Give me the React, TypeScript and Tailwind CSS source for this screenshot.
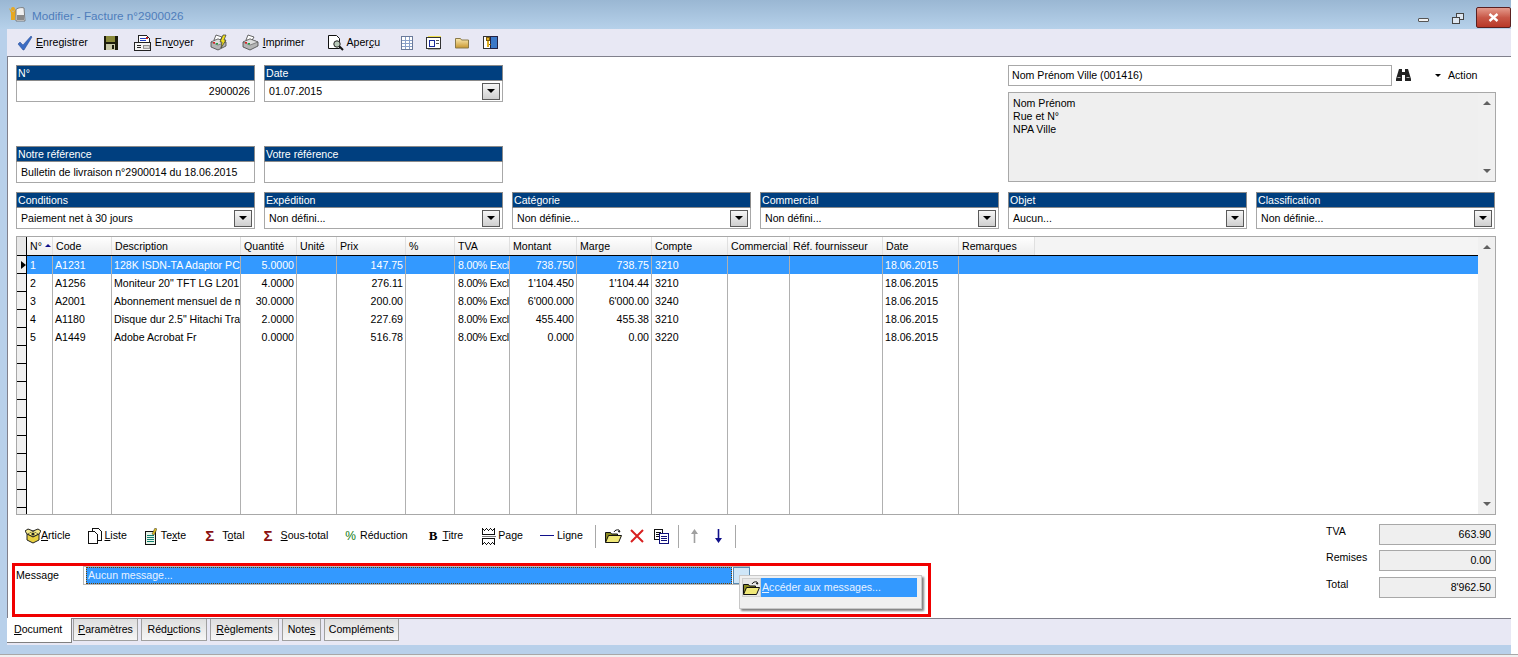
import type { ReactNode } from "react"

const font = "font-['Liberation_Sans',Arial,sans-serif]"

const Check = () => (
  <svg width="16" height="16" viewBox="0 0 16 16">
    <path d="M1 9l2-2 3 3 8-9 1 1-8 13h-1z" fill="#3b6cc4" stroke="#24488f" strokeWidth="0.5" />
  </svg>
)

const Floppy = () => (
  <svg width="15" height="15" viewBox="0 0 15 15" shapeRendering="crispEdges">
    <rect x="0.5" y="0.5" width="14" height="14" fill="#1c1c0c" />
    <rect x="3" y="1" width="9" height="6" fill="#8a8a3a" />
    <rect x="3" y="9" width="9" height="6" fill="#c8c8a8" />
    <rect x="9" y="10" width="2" height="4" fill="#1c1c0c" />
  </svg>
)

const Sender = () => (
  <svg width="17" height="17" viewBox="0 0 17 17" shapeRendering="crispEdges">
    <path d="M5 1h7l3 3v5H4V3z" fill="#fff" stroke="#222" />
    <rect x="6" y="4" width="6" height="1" fill="#2040c0" />
    <rect x="12" y="3" width="2" height="2" fill="#c02020" />
    <rect x="6" y="6" width="6" height="1" fill="#2040c0" />
    <rect x="0.5" y="8.5" width="16" height="8" fill="#f4f4f4" stroke="#222" />
    <rect x="3" y="11" width="4" height="1" fill="#222" />
    <rect x="3" y="13" width="4" height="1" fill="#222" />
    <rect x="9" y="11" width="6" height="3" fill="#d8d8d8" stroke="#444" strokeWidth="0.5" />
  </svg>
)

const Printer = ({ bolt }: { bolt?: boolean }) => (
  <svg width="17" height="17" viewBox="0 0 17 17">
    <path d="M6 1l6 2-3 5-5-2z" fill="#fff" stroke="#444" strokeWidth="0.8" />
    <path d="M1 8l7-3 8 3v4l-8 4-7-3z" fill="#b4b4b4" stroke="#444" strokeWidth="0.8" />
    <path d="M1 8l7 3 8-3-8-3z" fill="#dcdcdc" stroke="#555" strokeWidth="0.6" />
    <rect x="3" y="8" width="2" height="1.5" fill="#e02020" />
    <rect x="6" y="9" width="2" height="1.5" fill="#20a040" />
    {bolt && <path d="M13 1h3l-2 5h2l-5 8 1-6h-2z" fill="#f0e020" stroke="#333" strokeWidth="0.7" />}
  </svg>
)

const Preview = () => (
  <svg width="17" height="17" viewBox="0 0 17 17">
    <path d="M1.5 1.5h8l3 3v10h-11z" fill="#fff" stroke="#111" />
    <circle cx="10" cy="10" r="3.2" fill="#b8c8b8" stroke="#222" />
    <path d="M12.5 12.5l3.5 3.5" stroke="#111" strokeWidth="2" />
  </svg>
)

const SheetGrid = () => (
  <svg width="12" height="14" viewBox="0 0 12 14" shapeRendering="crispEdges">
    <rect x="0.5" y="0.5" width="11" height="13" fill="#fff" stroke="#6a7a9a" />
    <path d="M1 4h10M1 7h10M1 10h10M4.5 1v12M8.5 1v12" stroke="#8aa0c8" />
  </svg>
)

const Card = () => (
  <svg width="16" height="16" viewBox="0 0 16 16" shapeRendering="crispEdges">
    <rect x="2" y="1" width="13" height="3" fill="#f0e050" />
    <rect x="0.5" y="2.5" width="14" height="11" fill="#fff" stroke="#333" />
    <rect x="3" y="5" width="5" height="6" fill="#fff" stroke="#1a2a9a" />
    <rect x="10" y="5" width="3" height="1" fill="#555" />
    <rect x="10" y="8" width="3" height="1" fill="#555" />
    <rect x="2" y="14" width="12" height="1" fill="#aaa" />
  </svg>
)

const Folder = () => (
  <svg width="14" height="13" viewBox="0 0 14 13">
    <defs>
      <linearGradient id="fold" x1="0" y1="0" x2="0" y2="1">
        <stop offset="0" stopColor="#fbeab0" />
        <stop offset="1" stopColor="#c8962e" />
      </linearGradient>
    </defs>
    <path d="M0.5 2.5h5l1 1.5h7v8h-13z" fill="url(#fold)" stroke="#8a7a4a" />
  </svg>
)

const KeyBook = () => (
  <svg width="15" height="15" viewBox="0 0 15 15" shapeRendering="crispEdges">
    <rect x="0.5" y="1.5" width="7" height="12" fill="#fff" stroke="#333" />
    <rect x="7.5" y="1.5" width="7" height="12" fill="#3a78c8" stroke="#224" />
    <circle cx="5" cy="4" r="2" fill="#e0b020" stroke="#7a5a10" />
    <rect x="4" y="6" width="2" height="6" fill="#e0b020" />
    <rect x="6" y="9" width="2" height="1" fill="#7a5a10" />
  </svg>
)

const Binoculars = () => (
  <svg width="15" height="13" viewBox="0 0 15 13">
    <path d="M3 0h3v3h3V0h3l3 10v2H9V6H6v6H0v-2z" fill="#222" />
    <rect x="1.5" y="8" width="3" height="1" fill="#aaa" />
    <rect x="10.5" y="8" width="3" height="1" fill="#aaa" />
  </svg>
)

const ArticleBox = () => (
  <svg width="16" height="16" viewBox="0 0 16 16">
    <path d="M2 6l6-3 6 3-6 3z" fill="#fff27a" stroke="#222" />
    <path d="M2 6v6l6 3 6-3V6l-6 3z" fill="#e8d040" stroke="#222" />
    <path d="M2 6L0 3l3-2 5 2M14 6l2-3-3-2-5 2" fill="#f4e98a" stroke="#222" />
    <circle cx="8" cy="6" r="1.6" fill="#222" />
  </svg>
)

const Pages = () => (
  <svg width="14" height="16" viewBox="0 0 14 16" shapeRendering="crispEdges">
    <path d="M4.5 0.5h6l3 3v9h-9z" fill="#fff" stroke="#111" />
    <path d="M0.5 3.5h6l3 3v9h-9z" fill="#fff" stroke="#111" />
  </svg>
)

const Note = () => (
  <svg width="12" height="17" viewBox="0 0 12 17" shapeRendering="crispEdges">
    <rect x="0.5" y="3.5" width="10" height="13" fill="#e8f4e8" stroke="#111" />
    <path d="M2 7h7M2 9h7M2 11h7M2 13h7" stroke="#108070" />
    <path d="M7 6l3-6 2 1-3 6z" fill="#e0c020" stroke="#333" strokeWidth="0.5" shapeRendering="auto" />
  </svg>
)

const PageBreak = () => (
  <svg width="14" height="17" viewBox="0 0 14 17" shapeRendering="crispEdges">
    <path d="M0.5 6V0.5l2 2 2-2 2 2 2-2 2 2 2-2V6z" fill="#fff" stroke="#111" />
    <path d="M0.5 10v6.5l2-2 2 2 2-2 2 2 2-2 2 2V10z" fill="#fff" stroke="#111" />
    <path d="M0 8h14" stroke="#777" />
  </svg>
)

const OpenFolder = () => (
  <svg width="17" height="14" viewBox="0 0 17 14">
    <path d="M0.5 3.5h5l1 1.5h6v8h-12z" fill="#8a8a20" stroke="#111" />
    <path d="M3.5 6.5h13l-3 7h-13z" fill="#f0e878" stroke="#111" />
    <path d="M9 3c1-2 3-2.5 5-2l1 2-2-.5" fill="none" stroke="#111" />
  </svg>
)

const RedCross = () => (
  <svg width="14" height="14" viewBox="0 0 14 14">
    <path d="M1 1l12 12M13 1L1 13" stroke="#d82020" strokeWidth="2" />
  </svg>
)

const Copy = () => (
  <svg width="15" height="15" viewBox="0 0 15 15" shapeRendering="crispEdges">
    <rect x="0.5" y="0.5" width="8" height="10" fill="#fff" stroke="#111" />
    <path d="M2 3h5M2 5h5M2 7h5" stroke="#111" />
    <rect x="5.5" y="4.5" width="9" height="10" fill="#fff" stroke="#10107a" />
    <path d="M7 7h6M7 9h6M7 11h6" stroke="#10107a" />
  </svg>
)

const Arrow = ({ up, color }: { up?: boolean; color: string }) => (
  <svg width="9" height="14" viewBox="0 0 9 14" className={up ? "" : "rotate-180"}>
    <path d="M4.5 0L8 5H5.3v9H3.7V5H1z" fill={color} />
  </svg>
)

const Sel = () => (
  <span className="mr-[2px] flex h-[17px] w-[18px] shrink-0 items-center justify-center border border-[#5a5a5a] bg-gradient-to-b from-[#f6f6f6] to-[#cfcfcf]">
    <span className="h-0 w-0 border-x-[4px] border-t-[4px] border-x-transparent border-t-black" />
  </span>
)

const Field = ({ label, value, align, select }: { label: string; value?: string; align?: string; select?: boolean }) => (
  <div className="w-[239px]">
    <div className="h-[16px] border border-[#8a8a8a] bg-[#003f7f] pl-[1px] text-[10.6px] leading-[15px] text-white">{label}</div>
    <div className="flex h-[21px] items-center border border-t-0 border-[#a8a8a8] bg-white">
      <span className={`flex-1 px-[4px] pt-[1px] text-[10.6px] ${align ?? ""}`}>{value}</span>
      {select && <Sel />}
    </div>
  </div>
)

const columns = [
  { key: "no", title: "N°", w: "w-[26px]", cell: "pl-[3px]" },
  { key: "code", title: "Code", w: "w-[59px]", cell: "pl-[2px]" },
  { key: "desc", title: "Description", w: "w-[129px]", cell: "pl-[2px]" },
  { key: "qty", title: "Quantité", w: "w-[56px]", cell: "pr-[2px] text-right" },
  { key: "unit", title: "Unité", w: "w-[40px]", cell: "" },
  { key: "price", title: "Prix", w: "w-[69px]", cell: "pr-[2px] text-right" },
  { key: "pct", title: "%", w: "w-[49px]", cell: "" },
  { key: "tva", title: "TVA", w: "w-[55px]", cell: "pl-[3px] tracking-[-0.2px]" },
  { key: "amount", title: "Montant", w: "w-[67px]", cell: "pr-[2px] text-right" },
  { key: "margin", title: "Marge", w: "w-[75px]", cell: "pr-[2px] text-right" },
  { key: "account", title: "Compte", w: "w-[76px]", cell: "pl-[3px]" },
  { key: "sales", title: "Commercial", w: "w-[62px]", cell: "" },
  { key: "ref", title: "Réf. fournisseur", w: "w-[93px]", cell: "" },
  { key: "date", title: "Date", w: "w-[76px]", cell: "pl-[2px]" },
  { key: "notes", title: "Remarques", w: "w-[76px]", cell: "" },
]

const rows: Record<string, string>[] = [
  { no: "1", code: "A1231", desc: "128K ISDN-TA Adaptor PC", qty: "5.0000", price: "147.75", tva: "8.00% Excl", amount: "738.750", margin: "738.75", account: "3210", date: "18.06.2015" },
  { no: "2", code: "A1256", desc: 'Moniteur 20" TFT LG L201', qty: "4.0000", price: "276.11", tva: "8.00% Excl", amount: "1'104.450", margin: "1'104.44", account: "3210", date: "18.06.2015" },
  { no: "3", code: "A2001", desc: "Abonnement mensuel de m", qty: "30.0000", price: "200.00", tva: "8.00% Excl", amount: "6'000.000", margin: "6'000.00", account: "3240", date: "18.06.2015" },
  { no: "4", code: "A1180", desc: 'Disque dur 2.5" Hitachi Tra', qty: "2.0000", price: "227.69", tva: "8.00% Excl", amount: "455.400", margin: "455.38", account: "3210", date: "18.06.2015" },
  { no: "5", code: "A1449", desc: "Adobe Acrobat Fr", qty: "0.0000", price: "516.78", tva: "8.00% Excl", amount: "0.000", margin: "0.00", account: "3220", date: "18.06.2015" },
  ...Array.from({ length: 10 }, () => ({})),
]

const Scrollbar = () => (
  <div className="flex w-[17px] shrink-0 flex-col items-center justify-between bg-[#f0f0f0] py-[8px]">
    <span className="h-0 w-0 border-x-[4px] border-b-[4px] border-x-transparent border-b-[#606060]" />
    <span className="h-0 w-0 border-x-[4px] border-t-[4px] border-x-transparent border-t-[#606060]" />
  </div>
)

const Grid = () => (
  <div className="mt-[7px] flex h-[279px] w-[1480px] overflow-hidden border border-[#a8a8a8] bg-white">
    <div className="min-w-0 flex-1 overflow-hidden">
      <div className="flex h-[19px] border-b border-black">
        <div className="w-[10px] shrink-0 border-r border-black bg-[#e8e8e8]" />
        {columns.map((c) => (
          <div
            key={c.key}
            className={`relative shrink-0 overflow-hidden whitespace-nowrap border-r border-[#e0e0e0] bg-gradient-to-b from-white to-[#ececec] pl-[3px] text-[10.6px] leading-[18px] ${c.w}`}
          >
            {c.title}
            {c.key === "no" && (
              <span className="absolute left-[18px] top-[7px] h-0 w-0 border-x-[3px] border-b-[3px] border-x-transparent border-b-[#10108a]" />
            )}
          </div>
        ))}
        <div className="flex-1 bg-[#f4f4f4]" />
      </div>
      {rows.map((row, i) => (
        <div key={i} className={`flex h-[18px] ${i === 0 ? "bg-[#3399ff] text-white" : "text-black"}`}>
          <div className="flex w-[10px] shrink-0 items-center border-b border-r border-black bg-[#f0f0f0] text-black">
            {i === 0 && <span className="ml-[4px] h-0 w-0 border-y-[4px] border-l-[5px] border-y-transparent border-l-black" />}
          </div>
          {columns.map((c) => (
            <div
              key={c.key}
              className={`shrink-0 overflow-hidden whitespace-nowrap text-[10.6px] leading-[18px] ${c.w} ${c.cell} ${c.key === "notes" ? "" : "border-r border-[#b0b0b0]"}`}
            >
              {row[c.key]}
            </div>
          ))}
        </div>
      ))}
    </div>
    <Scrollbar />
  </div>
)

const Tool = ({ icon, children, className }: { icon?: ReactNode; children?: ReactNode; className?: string }) => (
  <div className={`flex shrink-0 items-center text-[10.6px] ${className ?? ""}`}>
    {icon}
    {children}
  </div>
)

const Sep = ({ className }: { className: string }) => <div className={`h-[23px] w-[1px] shrink-0 bg-[#a8a8a8] ${className}`} />

const Total = ({ label, value }: { label: string; value: string }) => (
  <div className="flex h-[21px] w-[170px] items-start justify-between text-[10.6px]">
    <span className="leading-[15px]">{label}</span>
    <span className="h-[21px] w-[117px] border border-[#a8a8a8] bg-[#efefef] pr-[4px] text-right leading-[19px]">{value}</span>
  </div>
)

const tabs = [
  { label: <><u>P</u>aramètres</>, w: "ml-[1px] w-[65px]" },
  { label: <>Réd<u>u</u>ctions</>, w: "ml-[3px] w-[66px]" },
  { label: <><u>R</u>èglements</>, w: "ml-[3px] w-[69px]" },
  { label: <>Note<u>s</u></>, w: "ml-[3px] w-[39px]" },
  { label: <>Compléments</>, w: "ml-[3px] w-[75px]" },
]

export default function App() {
  return (
    <div className={`flex h-[657px] w-[1518px] flex-col overflow-hidden bg-white text-black ${font}`}>
      <div className="flex h-[654px] w-[1511px] flex-col bg-[#b8d0ea]">
        <div className="flex h-[29px] shrink-0 items-center bg-gradient-to-b from-[#9ab7d3] to-[#b6d1ea]">
          <svg width="17" height="17" viewBox="0 0 17 17" className="ml-[9px]">
            <circle cx="4" cy="3" r="2" fill="#e8a820" />
            <path d="M0 2l4 4 3-3-1 11H2V7z" fill="#e8a820" />
            <path d="M7 4c0-2 6-3 8-2l1 13H7z" fill="#f0f0f0" stroke="#666" strokeWidth="0.8" />
            <rect x="8" y="9" width="7" height="5" fill="#8a8a8a" />
          </svg>
          <span className="ml-[6px] pt-[3px] text-[11.7px] text-[#4f7dbb]">Modifier - Facture n°2900026</span>
          <div className="ml-auto flex items-start self-start pt-[7px]">
            <span className="mt-[11px] h-[4px] w-[11px] rounded-[1px] border border-[#555] bg-[#f2f2f2]" />
            <svg width="12" height="11" viewBox="0 0 12 11" className="ml-[23px] mt-[6px]" shapeRendering="crispEdges">
              <rect x="4.5" y="0.5" width="7" height="6" fill="#dde6f0" stroke="#444" />
              <rect x="0.5" y="4.5" width="7" height="6" fill="#dde6f0" stroke="#444" />
            </svg>
            <div className="ml-[12px] flex h-[21px] w-[35px] items-center justify-center rounded-[2px] border border-[#5a2020] bg-gradient-to-b from-[#e49a8c] via-[#c85848] to-[#b83828]">
              <svg width="11" height="9" viewBox="0 0 11 9">
                <path d="M1.5 1l8 7M9.5 1l-8 7" stroke="#fff" strokeWidth="2.4" />
              </svg>
            </div>
          </div>
        </div>

        <div className="flex min-h-0 flex-1 flex-col pb-[9px] pl-[7px]">
          <div className="flex h-[27px] shrink-0 items-center bg-[#e8e8f4] pl-[10px]">
            <Tool icon={<Check />}><span className="ml-[3px]"><u>E</u>nregistrer</span></Tool>
            <Tool className="ml-[15px]" icon={<Floppy />} />
            <Tool className="ml-[16px]" icon={<Sender />}><span className="ml-[4px]">En<u>v</u>oyer</span></Tool>
            <Tool className="ml-[16px]" icon={<Printer bolt />} />
            <Tool className="ml-[15px]" icon={<Printer />}><span className="ml-[4px]"><u>I</u>mprimer</span></Tool>
            <Tool className="ml-[22px]" icon={<Preview />}><span className="ml-[3px]">Aper<u>ç</u>u</span></Tool>
            <Tool className="ml-[21px]" icon={<SheetGrid />} />
            <Tool className="ml-[13px]" icon={<Card />} />
            <Tool className="ml-[13px]" icon={<Folder />} />
            <Tool className="ml-[14px]" icon={<KeyBook />} />
          </div>

          <div className="flex min-h-0 flex-1 flex-col border-l border-t border-[#80808c] bg-white pl-[8px] pt-[8px]">
            <div className="flex">
              <div className="flex w-[992px] shrink-0 flex-col">
                <div className="flex gap-[9px]">
                  <Field label="N°" value="2900026" align="text-right" />
                  <Field label="Date" value="01.07.2015" select />
                </div>
                <div className="mt-[44px] flex gap-[9px]">
                  <Field label="Notre référence" value="Bulletin de livraison n°2900014 du 18.06.2015" />
                  <Field label="Votre référence" />
                </div>
              </div>
              <div className="w-[488px]">
                <div className="flex items-center">
                  <div className="flex h-[21px] w-[384px] items-center border border-[#a8a8a8] pl-[3px] text-[10.6px]">Nom Prénom Ville (001416)</div>
                  <span className="ml-[4px]"><Binoculars /></span>
                  <span className="ml-[24px] h-0 w-0 border-x-[3px] border-t-[3px] border-x-transparent border-t-black" />
                  <span className="ml-[7px] text-[10.6px]">Action</span>
                </div>
                <div className="mt-[6px] flex h-[90px] border border-[#a8a8a8] bg-[#efefef]">
                  <div className="flex-1 pl-[4px] pt-[4px] text-[10.6px] leading-[13px]">
                    <div>Nom Prénom</div>
                    <div>Rue et N°</div>
                    <div>NPA Ville</div>
                  </div>
                  <Scrollbar />
                </div>
              </div>
            </div>

            <div className="mt-[9px] flex gap-[9px]">
              <Field label="Conditions" value="Paiement net à 30 jours" select />
              <Field label="Expédition" value="Non défini..." select />
              <Field label="Catégorie" value="Non définie..." select />
              <Field label="Commercial" value="Non défini..." select />
              <Field label="Objet" value="Aucun..." select />
              <Field label="Classification" value="Non définie..." select />
            </div>

            <Grid />

            <div className="flex min-h-0 flex-1">
              <div className="flex w-[1308px] shrink-0 flex-col">
                <div className="mt-[9px] flex h-[24px] items-center pl-[9px]">
                  <Tool icon={<ArticleBox />}><span><u>A</u>rticle</span></Tool>
                  <Tool className="ml-[18px]" icon={<Pages />}><span className="ml-[2px]"><u>L</u>iste</span></Tool>
                  <Tool className="ml-[18px]" icon={<Note />}><span className="ml-[4px]">Te<u>x</u>te</span></Tool>
                  <Tool className="ml-[19px]" icon={<span className="w-[12px] text-[15px] font-bold text-[#8a1010]">Σ</span>}><span className="ml-[5px]">T<u>o</u>tal</span></Tool>
                  <Tool className="ml-[19px]" icon={<span className="w-[12px] text-[15px] font-bold text-[#8a1010]">Σ</span>}><span className="ml-[5px]"><u>S</u>ous-total</span></Tool>
                  <Tool className="ml-[17px]" icon={<span className="text-[12px] text-[#107a10]">%</span>}><span className="ml-[4px]">Réduction</span></Tool>
                  <Tool className="ml-[21px]" icon={<span className="font-['Liberation_Serif',serif] text-[13px] font-bold">B</span>}><span className="ml-[5px]"><u>T</u>itre</span></Tool>
                  <Tool className="ml-[19px]" icon={<PageBreak />}><span className="ml-[2px]">Page</span></Tool>
                  <Tool className="ml-[17px]" icon={<span className="h-[1px] w-[14px] bg-[#10108a]" />}><span className="ml-[3px]">Ligne</span></Tool>
                  <Sep className="ml-[12px]" />
                  <span className="ml-[9px]"><OpenFolder /></span>
                  <span className="ml-[8px]"><RedCross /></span>
                  <span className="ml-[10px]"><Copy /></span>
                  <Sep className="ml-[9px]" />
                  <span className="ml-[11px]"><Arrow up color="#a0a0a0" /></span>
                  <span className="ml-[15px]"><Arrow color="#10108a" /></span>
                  <Sep className="ml-[12px]" />
                </div>

                <div className="relative mt-[15px] flex h-[54px] w-[919px] -ml-[4px] border-[3px] border-[#f00000] pl-[1px]">
                  <span className="mt-[3px] w-[67px] text-[10.6px] leading-[13px]">Message</span>
                  <div className="flex h-[19px] w-[667px] border-b border-l border-t border-[#b8b8b8] pl-[2px]">
                    <div className="w-[646px] border border-dotted border-[#6a4000] bg-[#3399ff] pl-[1px] text-[10.6px] leading-[15px] text-[#e8f2ff]">Aucun message...</div>
                    <div className="ml-[1px] flex h-[17px] w-[17px] items-center justify-center border border-[#5a8ab0] bg-[#cfe6f8] text-[9px] leading-none">.</div>
                  </div>
                  <div className="absolute left-[724px] top-[9px] h-[34px] w-[183px] border border-[#c8c8c8] bg-[#f0f0f0] py-[2px] pl-[2px] pr-[4px] shadow-[2px_2px_2px_#808080]">
                    <div className="flex h-[19px]">
                      <span className="flex w-[19px] items-center justify-center border border-[#d0d0d0] bg-[#e8e8e8]"><OpenFolder /></span>
                      <span className="flex-1 bg-[#3399ff] pl-[1px] text-[10.6px] leading-[19px] text-[#e8f2ff]"><u>A</u>ccéder aux messages...</span>
                    </div>
                  </div>
                </div>
              </div>

              <div className="mt-[9px] flex flex-col gap-[5px] pl-[2px]">
                <Total label="TVA" value="663.90" />
                <Total label="Remises" value="0.00" />
                <div className="mt-[1px]"><Total label="Total" value="8'962.50" /></div>
              </div>
            </div>
          </div>

          <div className="flex h-[27px] shrink-0 items-start border-t border-[#80808c] bg-[#e8e8f4]">
            <div className="-mt-[1px] flex h-[25px] w-[65px] items-center border-b border-r border-[#808080] bg-white pl-[7px] text-[10.6px]"><span><u>D</u>ocument</span></div>
            {tabs.map((t, i) => (
              <div key={i} className={`flex h-[22px] items-center justify-center border border-t-0 border-[#a0a0a0] bg-gradient-to-b from-[#dedede] to-[#f6f6f6] text-[10.6px] ${t.w}`}>
                <span>{t.label}</span>
              </div>
            ))}
          </div>
        </div>
      </div>
      <div className="flex-1 border-t border-[#a8a8a8] bg-[#f0f0f0]" />
    </div>
  )
}
